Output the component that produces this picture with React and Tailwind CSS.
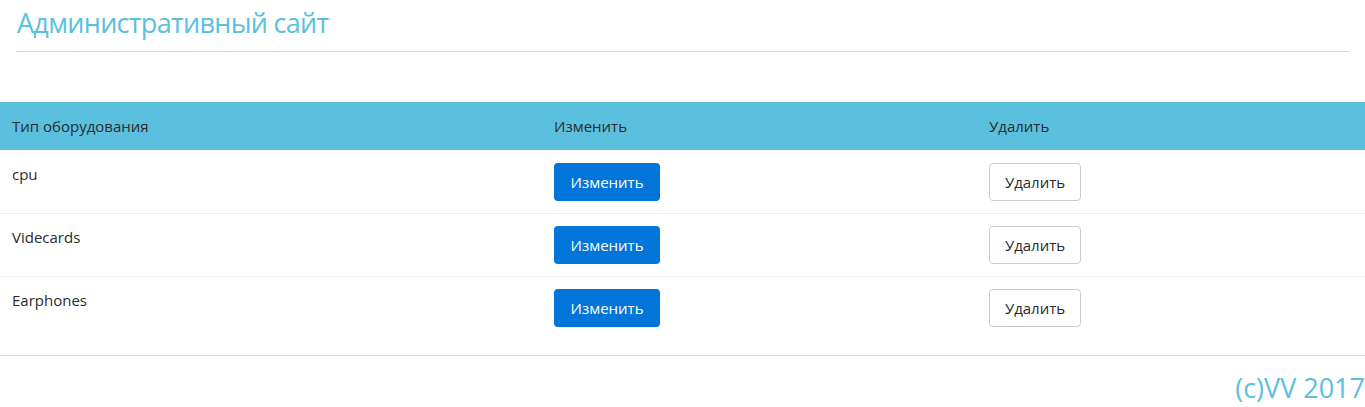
const rows = ['cpu', 'Videcards', 'Earphones'];

export default function App() {
  return (
    <div className="w-[1365px] h-[407px] bg-white overflow-hidden text-[#292b2c]" style={{ fontFamily: '"Open Sans", "Noto Sans", sans-serif' }}>
      <div className="px-4">
        <h1 className="pt-[5px] pb-[10px] pl-px text-[27px] leading-[36px] font-normal text-[#5bc0de] tracking-[-0.7px]">Административный сайт</h1>
        <hr className="border-0 border-t border-[#d9d9d9] mr-[-1px]" />
      </div>

      <table className="mt-[50px] w-full border-collapse text-[15px]">
        <thead>
          <tr className="bg-[#5bc0de] h-[48px] text-[#292b2c]">
            <th className="w-[542px] px-3 text-left font-normal">Тип оборудования</th>
            <th className="w-[435px] px-3 text-left font-normal">Изменить</th>
            <th className="px-3 text-left font-normal">Удалить</th>
          </tr>
        </thead>
        <tbody>
          {rows.map((name, i) => {
            const pad = i === 0 ? 'pt-[13px]' : 'pt-3';
            return (
              <tr key={name} className={i > 0 ? 'border-t border-[#eceeef]' : ''}>
                <td className={`px-3 ${pad} pb-3 align-top leading-[22px]`}>{name}</td>
                <td className={`px-3 ${pad} pb-3 align-top`}>
                  <button className="h-[38px] w-[106px] rounded bg-[#0275d8] text-white text-[15px]">Изменить</button>
                </td>
                <td className={`px-3 ${pad} pb-3 align-top`}>
                  <button className="h-[38px] w-[92px] rounded border border-[#cccccc] bg-white text-[#292b2c] text-[15px]">Удалить</button>
                </td>
              </tr>
            );
          })}
        </tbody>
      </table>

      <hr className="mt-[16px] border-0 border-t border-[#d9d9d9]" />
      <div className="flex justify-end pt-[14px]">
        <p className="text-[27px] leading-[36px] text-[#5bc0de]">(c)VV 2017</p>
      </div>
    </div>
  );
}
